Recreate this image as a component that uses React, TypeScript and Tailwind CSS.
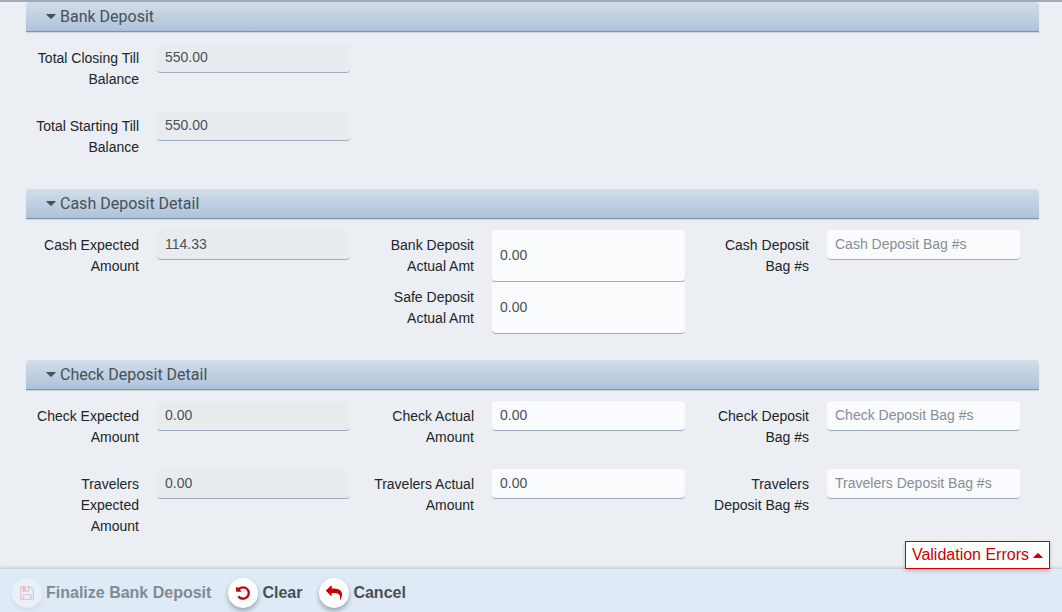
import React from "react";

interface FieldProps {
  id: string;
  label: string;
  value?: string;
  placeholder?: string;
  readOnly?: boolean;
  tall?: boolean;
}

const Field: React.FC<FieldProps> = ({ id, label, value, placeholder, readOnly, tall }) => (
  <div className={`grid grid-cols-[113fr_193fr] items-start gap-[18px] pr-[11px] ${tall ? "" : "pb-[21px]"}`}>
    <label htmlFor={id} className="mt-[5px] pl-2 text-right text-sm leading-[21px] text-[#212529]">
      {label}
    </label>
    <input
      id={id}
      type="text"
      defaultValue={value}
      placeholder={placeholder}
      readOnly={readOnly}
      className={`w-full min-w-0 rounded border-b border-[#9cabbd] px-2 pb-[2px] text-sm text-[#495057] outline-none placeholder:text-[#868e96] ${
        readOnly ? "bg-[#e9ecef]" : "bg-[#fafbfd]"
      } ${tall ? "h-[52px]" : "h-[30px]"}`}
    />
  </div>
);

interface SectionProps {
  title: string;
  className?: string;
  children: React.ReactNode;
}

const Section: React.FC<SectionProps> = ({ title, className = "", children }) => (
  <section className={className}>
    <h2>
      <button
        type="button"
        aria-expanded="true"
        className="flex h-[30px] w-full items-center gap-1 rounded-t border-t border-b border-t-[#d5dde4] border-b-[#7f93ad] bg-linear-to-b from-[#d1dde9] to-[#adc2da] pl-5 text-left font-[Roboto,sans-serif] text-base leading-6 text-[#495057] shadow-[0_1px_1px_rgba(0,0,0,0.12)]"
      >
        <svg viewBox="0 0 10 6" className="h-[6px] w-[10px]" fill="currentColor" aria-hidden="true">
          <path d="M0.6 0h8.8q.6 0 .3.5L5.4 4.8q-.4.4-.8 0L.3.5Q0 0 .6 0z" />
        </svg>
        {title}
      </button>
    </h2>
    <div className="mt-[11px] grid grid-cols-3 items-start pr-2">{children}</div>
  </section>
);

interface ActionButtonProps {
  label: string;
  path: string;
  disabled?: boolean;
}

const ActionButton: React.FC<ActionButtonProps> = ({ label, path, disabled }) => (
  <button type="button" disabled={disabled} className="flex items-center gap-1 font-bold text-[#495057] disabled:text-[#7f8a93]">
    <span
      className={`flex size-[30px] items-center justify-center rounded-full ${
        disabled ? "bg-white/30 text-[#cc0000]/20 shadow-[0_3px_5px_rgba(0,0,0,0.06)]" : "bg-white text-[#cc0000] shadow-[0_3px_5px_rgba(0,0,0,0.3)]"
      }`}
    >
      <svg viewBox="0 0 1792 1792" className="size-4" fill="currentColor" aria-hidden="true">
        <path d={path} />
      </svg>
    </span>
    {label}
  </button>
);

const SAVE =
  "M512 1536h768v-384h-768v384zm896 0h128v-896q0-14-10-38.5t-20-34.5l-281-281q-10-10-34-20t-39-10v416q0 40-28 68t-68 28h-576q-40 0-68-28t-28-68v-416h-128v1280h128v-416q0-40 28-68t68-28h832q40 0 68 28t28 68v416zm-384-928v-320q0-13-9.5-22.5t-22.5-9.5h-192q-13 0-22.5 9.5t-9.5 22.5v320q0 13 9.5 22.5t22.5 9.5h192q13 0 22.5-9.5t9.5-22.5zm640 32v928q0 40-28 68t-68 28h-1344q-40 0-68-28t-28-68v-1344q0-40 28-68t68-28h928q40 0 88 20t76 48l280 280q28 28 48 76t20 88z";
const UNDO =
  "M1664 896q0 156-61 298t-164 245-245 164-298 61q-172 0-327-72.5t-264-204.5q-7-10-6.5-22.5t8.5-20.5l137-138q10-9 25-9 16 2 23 12 73 95 179 147t225 52q104 0 198.5-40.5t163.5-109.5 109.5-163.5 40.5-198.5-40.5-198.5-109.5-163.5-163.5-109.5-198.5-40.5q-98 0-188 35.5t-160 101.5l137 138q31 30 14 69-17 40-59 40h-448q-26 0-45-19t-19-45v-448q0-42 40-59 39-17 69 14l130 129q107-101 244.5-156.5t284.5-55.5q156 0 298 61t245 164 164 245 61 298z";
const REPLY =
  "M1792 1120q0 166-127 451-3 7-10.5 24t-13.5 30-13 22q-12 17-28 17-15 0-23.5-10t-8.5-25q0-9 2.5-26.5t2.5-23.5q5-68 5-123 0-101-17.5-181t-48.5-138.5-80-101-105.5-69.5-133-42.5-154-21.5-175.5-6h-224v256q0 26-19 45t-45 19-45-19l-512-512q-19-19-19-45t19-45l512-512q19-19 45-19t45 19 19 45v256h224q713 0 875 403 53 134 53 333z";

const App: React.FC = () => {
  return (
    <div className="flex min-h-screen flex-col border-t-2 border-[#9dabba] bg-[#ebeff4] font-['Liberation_Sans',Arial,sans-serif]">
      <main className="flex-1 pr-[23px] pl-[26px]">
        <Section title="Bank Deposit">
          <div className="col-span-3 grid grid-cols-3">
            <Field id="closing-till" label="Total Closing Till Balance" value="550.00" readOnly />
          </div>
          <div className="col-span-3 grid grid-cols-3">
            <Field id="starting-till" label="Total Starting Till Balance" value="550.00" readOnly />
          </div>
        </Section>

        <Section title="Cash Deposit Detail" className="mt-[10px]">
          <Field id="cash-expected" label="Cash Expected Amount" value="114.33" readOnly />
          <div>
            <Field id="bank-actual" label="Bank Deposit Actual Amt" value="0.00" tall />
            <Field id="safe-actual" label="Safe Deposit Actual Amt" value="0.00" tall />
          </div>
          <Field id="cash-bags" label="Cash Deposit Bag #s" placeholder="Cash Deposit Bag #s" />
        </Section>

        <Section title="Check Deposit Detail" className="mt-[26px]">
          <Field id="check-expected" label="Check Expected Amount" value="0.00" readOnly />
          <Field id="check-actual" label="Check Actual Amount" value="0.00" />
          <Field id="check-bags" label="Check Deposit Bag #s" placeholder="Check Deposit Bag #s" />
          <Field id="travelers-expected" label="Travelers Expected Amount" value="0.00" readOnly />
          <Field id="travelers-actual" label="Travelers Actual Amount" value="0.00" />
          <Field id="travelers-bags" label="Travelers Deposit Bag #s" placeholder="Travelers Deposit Bag #s" />
        </Section>
      </main>

      <footer className="sticky bottom-0 flex h-[43px] items-center gap-[17px] bg-[#deeaf6] pt-2 pb-1 pl-3 shadow-[0_0_4px_rgba(0,0,0,0.3)]">
        <ActionButton label="Finalize Bank Deposit" path={SAVE} disabled />
        <ActionButton label="Clear" path={UNDO} />
        <ActionButton label="Cancel" path={REPLY} />

        {/* Error panel toggle, sits on top of the action bar */}
        <button
          type="button"
          className="absolute right-3 bottom-full flex h-7 items-center gap-1 border border-[#cc0000] bg-white px-[6px] text-base text-[#cc0000] shadow-[0_2px_4px_rgba(0,0,0,0.2)]"
        >
          Validation Errors
          <svg viewBox="0 0 10 5" className="h-[5px] w-[10px]" fill="currentColor" aria-hidden="true">
            <path d="M0.6 5h8.8q.6 0 .3-.5L5.4.2q-.4-.4-.8 0L.3 4.5Q0 5 .6 5z" />
          </svg>
        </button>
      </footer>
    </div>
  );
};

export default App;
